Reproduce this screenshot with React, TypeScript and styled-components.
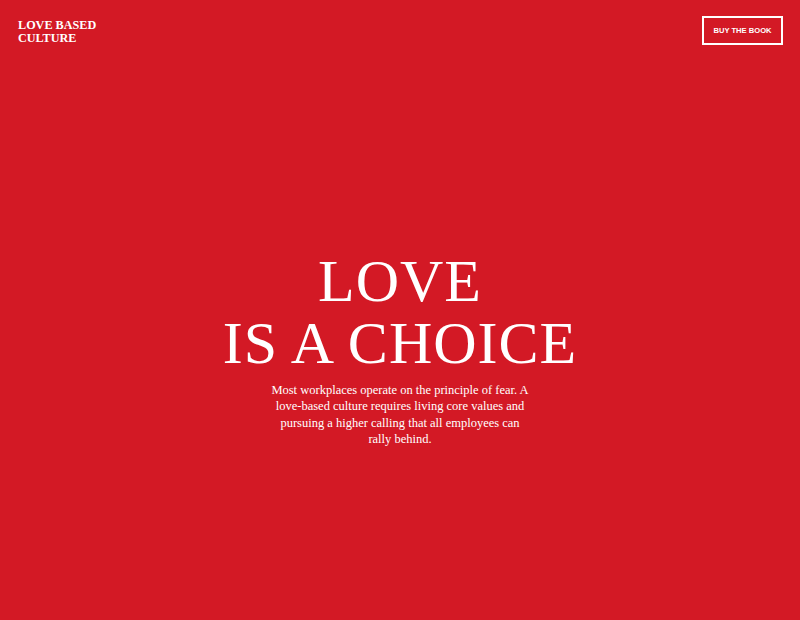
import React from "react";
import styled, { createGlobalStyle } from "styled-components";

const GlobalStyle = createGlobalStyle`
  html, body {
    margin: 0;
    padding: 0;
    background: #d31925;
  }
  * {
    box-sizing: border-box;
  }
`;

const Page = styled.div`
  display: flex;
  flex-direction: column;
  min-height: 100vh;
  background: #d31925;
  color: #fff;
`;

const Header = styled.header`
  display: flex;
  justify-content: space-between;
  align-items: flex-start;
  padding: 16px 18px 0 18px;
`;

const Logo = styled.div`
  font-family: "Liberation Serif", "Times New Roman", serif;
  font-weight: 700;
  font-size: 12.2px;
  line-height: 13px;
  margin-top: 3px;
  text-transform: uppercase;
`;

const BuyButton = styled.a`
  display: flex;
  align-items: center;
  justify-content: center;
  width: 81px;
  height: 29px;
  margin-right: -1px;
  border: 2px solid #fff;
  font-family: "Liberation Sans", Arial, sans-serif;
  font-weight: 700;
  font-size: 7.6px;
  color: #fff;
  text-decoration: none;
  cursor: pointer;
`;

const Hero = styled.main`
  flex: 1;
  display: flex;
  flex-direction: column;
  align-items: center;
  justify-content: center;
  padding: 32px 0 0 0;
  text-align: center;
`;

const Title = styled.h1`
  margin: 0;
  font-family: "Liberation Serif", "Times New Roman", serif;
  font-weight: 400;
  font-size: 60px;
  line-height: 62px;
  letter-spacing: 1px;
  text-transform: uppercase;
`;

const Lead = styled.p`
  margin: 8px 0 0 0;
  width: 262px;
  font-family: "Liberation Serif", "Times New Roman", serif;
  font-size: 12.5px;
  line-height: 16.5px;
`;

export default function App() {
  return (
    <>
      <GlobalStyle />
      <Page>
        <Header>
          <Logo>
            Love Based
            <br />
            Culture
          </Logo>
          <BuyButton>BUY THE BOOK</BuyButton>
        </Header>
        <Hero>
          <Title>
            Love
            <br />
            Is a Choice
          </Title>
          <Lead>
            Most workplaces operate on the principle of fear. A love-based
            culture requires living core values and pursuing a higher calling
            that all employees can rally behind.
          </Lead>
        </Hero>
      </Page>
    </>
  );
}
